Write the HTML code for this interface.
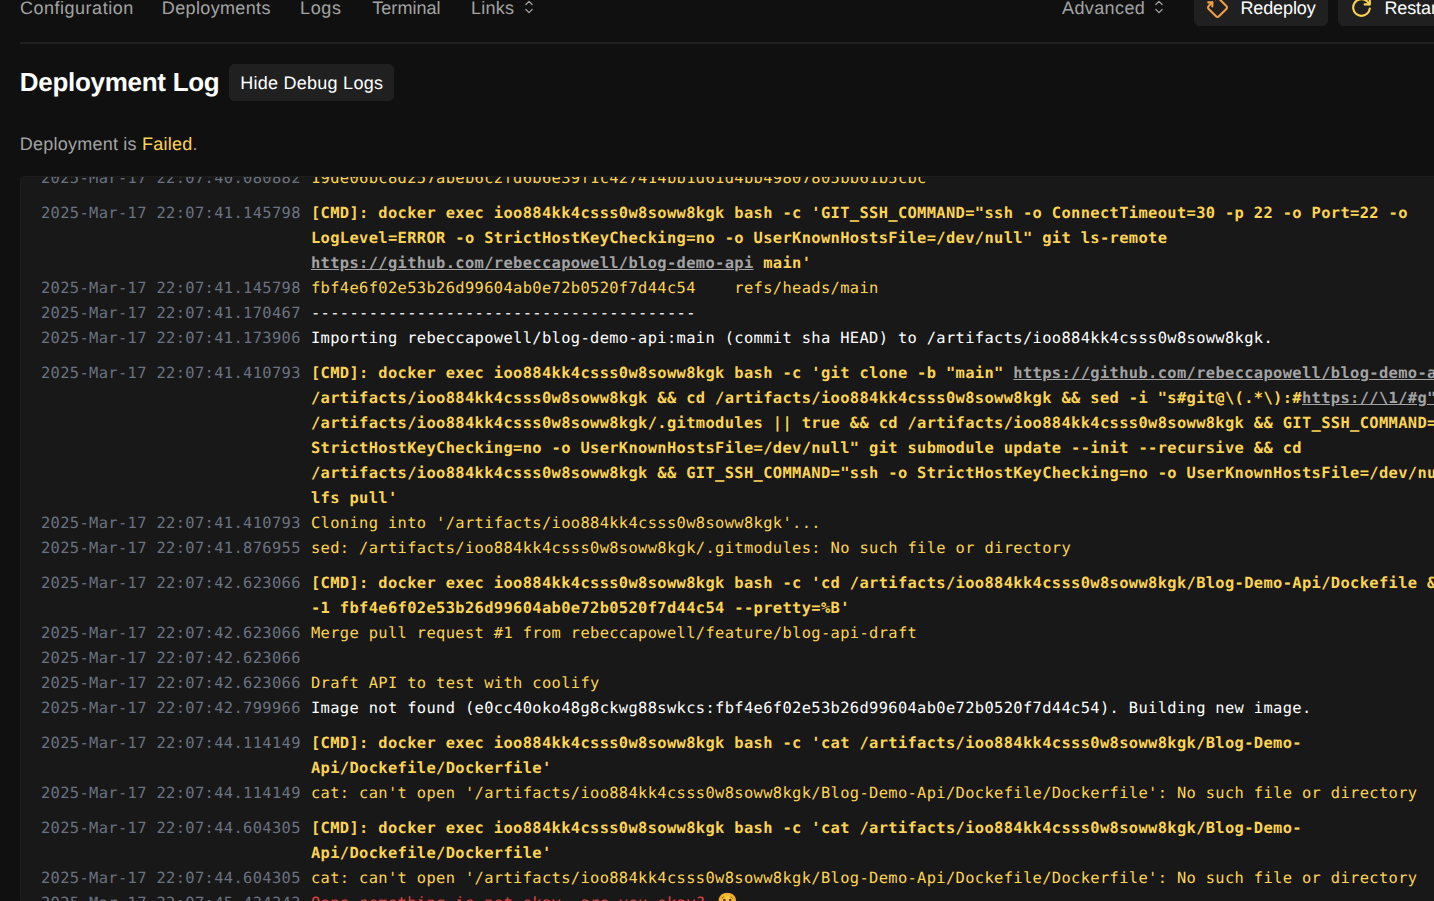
<!DOCTYPE html>
<html lang="en">
<head>
<meta charset="utf-8">
<title>Deployment Log</title>
<style>
*{box-sizing:border-box;margin:0;padding:0}
html,body{width:1434px;height:901px;overflow:hidden;background:#101010}
body{position:relative;font-family:"Liberation Sans",sans-serif;color:#fff;font-size:18px;text-rendering:geometricPrecision}
.abs{position:absolute;white-space:nowrap}
.nav{top:-3.8px;height:25px;line-height:25px;color:#a3a3a3;font-size:18px}
.ico{position:absolute;display:block}
.navline{position:absolute;left:20px;top:42px;width:1500px;height:2px;background:#202020}
.btn{position:absolute;height:37.5px;background:#202020;border:1.25px solid #202020;border-radius:5px;color:#fff;line-height:35px;font-size:18px;white-space:nowrap}
h2{position:absolute;left:19.8px;letter-spacing:-0.29px;top:63.6px;height:37.5px;line-height:37.5px;font-size:26px;font-weight:700;color:#fff;white-space:nowrap}
.status{left:19.8px;letter-spacing:0.23px;top:132px;height:25px;line-height:25px;color:#a3a3a3}
.status b{font-weight:400;color:#fcd452}
#box{position:absolute;left:20px;top:176px;width:1560px;height:800px;background:#181818;border:1px dotted #242424;border-radius:5px;overflow:hidden}
#logs{position:absolute;left:20px;top:-11px;text-rendering:geometricPrecision;width:1520px;font-family:"DejaVu Sans Mono","Liberation Mono",monospace;font-size:15.4px;letter-spacing:0.355px;line-height:25px;color:#fff}
.r{display:flex;gap:10px;white-space:pre}
.r.c{margin-top:10px;font-weight:700}
.t{flex:none;color:#6b7280;font-weight:400;width:260px}
.h{color:#fcd452}
.e{color:#e04040}
u{color:#a3a3a3;text-decoration:underline}
.em{line-height:0;position:relative;left:2px;top:-1.5px;font-size:16.6px;letter-spacing:0;filter:hue-rotate(-12deg) saturate(1.05) brightness(.95)}
</style>
</head>
<body>
<div id="n1" class="abs nav" style="left:20px;letter-spacing:0.51px">Configuration</div>
<div id="n2" class="abs nav" style="left:161.8px;letter-spacing:0.36px">Deployments</div>
<div id="n3" class="abs nav" style="left:300px;letter-spacing:0.66px">Logs</div>
<div id="n4" class="abs nav" style="left:372.3px;letter-spacing:0.03px">Terminal</div>
<div id="n5" class="abs nav" style="left:471px;letter-spacing:0.225px">Links</div>
<svg class="ico" style="left:519px;top:-3px;color:#a3a3a3" width="20" height="20" viewBox="0 0 24 24" fill="none" stroke="currentColor" stroke-width="1.5"><path stroke-linecap="round" stroke-linejoin="round" d="M8.25 15L12 18.75 15.75 15m-7.5-6L12 5.25 15.75 9"/></svg>
<div id="n6" class="abs nav" style="left:1062px;letter-spacing:0.39px">Advanced</div>
<svg class="ico" style="left:1149px;top:-3px;color:#a3a3a3" width="20" height="20" viewBox="0 0 24 24" fill="none" stroke="currentColor" stroke-width="1.5"><path stroke-linecap="round" stroke-linejoin="round" d="M8.25 15L12 18.75 15.75 15m-7.5-6L12 5.25 15.75 9"/></svg>
<div class="btn" style="left:1194px;top:-12px;width:134px">
<svg class="ico" style="left:10px;top:5.5px;color:#f0a040" width="25" height="25" viewBox="0 0 24 24"><g fill="none" stroke="currentColor" stroke-linecap="round" stroke-linejoin="round" stroke-width="2"><path d="M10.09 4.01l.496 -.495a2 2 0 0 1 2.828 0l7.071 7.07a2 2 0 0 1 0 2.83l-7.07 7.07a2 2 0 0 1 -2.83 0l-7.07 -7.07a2 2 0 0 1 0 -2.83l3.535 -3.535h-3.988"/><path d="M7.05 11.038v-3.988"/></g></svg>
<span id="b1" class="abs" style="left:45.4px;top:1.5px;letter-spacing:-0.1px">Redeploy</span></div>
<div class="btn" style="left:1338px;top:-12px;width:120px">
<svg class="ico" style="left:10px;top:5.5px;color:#fcd452" width="25" height="25" viewBox="0 0 24 24"><g fill="none" stroke="currentColor" stroke-linecap="round" stroke-linejoin="round" stroke-width="2"><path d="M19.933 13.041a8 8 0 1 1-9.925-8.788c3.899-1 7.935 1.007 9.425 4.747"/><path d="M20 4v5h-5"/></g></svg>
<span id="b2" class="abs" style="left:45.4px;top:1.5px;letter-spacing:-0.1px">Restart</span></div>
<div class="navline"></div>
<h2 id="h">Deployment Log</h2>
<div class="btn" style="left:229px;top:63.75px;width:165px"><span id="b3" class="abs" style="left:10.2px;top:0.9px;letter-spacing:0.26px">Hide Debug Logs</span></div>
<div id="st" class="abs status">Deployment is <b>Failed</b>.</div>
<div id="box"><div id="logs">
<div class="r"><span class="t">2025-Mar-17 22:07:40.080882</span><span class="h">19de06bc8d257abeb6c2fd6b6e39f1c427414bb1d61d4bb49807805bb61b5cbc</span></div>
<div class="r c"><span class="t">2025-Mar-17 22:07:41.145798</span><span class="h">[CMD]: docker exec ioo884kk4csss0w8soww8kgk bash -c 'GIT_SSH_COMMAND="ssh -o ConnectTimeout=30 -p 22 -o Port=22 -o
LogLevel=ERROR -o StrictHostKeyChecking=no -o UserKnownHostsFile=/dev/null" git ls-remote
<u>https://github.com/rebeccapowell/blog-demo-api</u> main'</span></div>
<div class="r"><span class="t">2025-Mar-17 22:07:41.145798</span><span class="h">fbf4e6f02e53b26d99604ab0e72b0520f7d44c54    refs/heads/main</span></div>
<div class="r"><span class="t">2025-Mar-17 22:07:41.170467</span><span>----------------------------------------</span></div>
<div class="r"><span class="t">2025-Mar-17 22:07:41.173906</span><span>Importing rebeccapowell/blog-demo-api:main (commit sha HEAD) to /artifacts/ioo884kk4csss0w8soww8kgk.</span></div>
<div class="r c"><span class="t">2025-Mar-17 22:07:41.410793</span><span class="h">[CMD]: docker exec ioo884kk4csss0w8soww8kgk bash -c 'git clone -b "main" <u>https://github.com/rebeccapowell/blog-demo-api</u>
/artifacts/ioo884kk4csss0w8soww8kgk &amp;&amp; cd /artifacts/ioo884kk4csss0w8soww8kgk &amp;&amp; sed -i "s#git@\(.*\):#<u>https://\1/#g"</u>
/artifacts/ioo884kk4csss0w8soww8kgk/.gitmodules || true &amp;&amp; cd /artifacts/ioo884kk4csss0w8soww8kgk &amp;&amp; GIT_SSH_COMMAND="ssh -o
StrictHostKeyChecking=no -o UserKnownHostsFile=/dev/null" git submodule update --init --recursive &amp;&amp; cd
/artifacts/ioo884kk4csss0w8soww8kgk &amp;&amp; GIT_SSH_COMMAND="ssh -o StrictHostKeyChecking=no -o UserKnownHostsFile=/dev/null" git
lfs pull'</span></div>
<div class="r"><span class="t">2025-Mar-17 22:07:41.410793</span><span class="h">Cloning into '/artifacts/ioo884kk4csss0w8soww8kgk'...</span></div>
<div class="r"><span class="t">2025-Mar-17 22:07:41.876955</span><span class="h">sed: /artifacts/ioo884kk4csss0w8soww8kgk/.gitmodules: No such file or directory</span></div>
<div class="r c"><span class="t">2025-Mar-17 22:07:42.623066</span><span class="h">[CMD]: docker exec ioo884kk4csss0w8soww8kgk bash -c 'cd /artifacts/ioo884kk4csss0w8soww8kgk/Blog-Demo-Api/Dockefile &amp;&amp; git log
-1 fbf4e6f02e53b26d99604ab0e72b0520f7d44c54 --pretty=%B'</span></div>
<div class="r"><span class="t">2025-Mar-17 22:07:42.623066</span><span class="h">Merge pull request #1 from rebeccapowell/feature/blog-api-draft</span></div>
<div class="r"><span class="t">2025-Mar-17 22:07:42.623066</span><span class="h"> </span></div>
<div class="r"><span class="t">2025-Mar-17 22:07:42.623066</span><span class="h">Draft API to test with coolify</span></div>
<div class="r"><span class="t">2025-Mar-17 22:07:42.799966</span><span>Image not found (e0cc40oko48g8ckwg88swkcs:fbf4e6f02e53b26d99604ab0e72b0520f7d44c54). Building new image.</span></div>
<div class="r c"><span class="t">2025-Mar-17 22:07:44.114149</span><span class="h">[CMD]: docker exec ioo884kk4csss0w8soww8kgk bash -c 'cat /artifacts/ioo884kk4csss0w8soww8kgk/Blog-Demo-
Api/Dockefile/Dockerfile'</span></div>
<div class="r"><span class="t">2025-Mar-17 22:07:44.114149</span><span class="h">cat: can't open '/artifacts/ioo884kk4csss0w8soww8kgk/Blog-Demo-Api/Dockefile/Dockerfile': No such file or directory</span></div>
<div class="r c"><span class="t">2025-Mar-17 22:07:44.604305</span><span class="h">[CMD]: docker exec ioo884kk4csss0w8soww8kgk bash -c 'cat /artifacts/ioo884kk4csss0w8soww8kgk/Blog-Demo-
Api/Dockefile/Dockerfile'</span></div>
<div class="r"><span class="t">2025-Mar-17 22:07:44.604305</span><span class="h">cat: can't open '/artifacts/ioo884kk4csss0w8soww8kgk/Blog-Demo-Api/Dockefile/Dockerfile': No such file or directory</span></div>
<div class="r"><span class="t">2025-Mar-17 22:07:45.434343</span><span class="e">Oops something is not okay, are you okay? <span class="em">😢</span></span></div>
</div></div>
</body>
</html>
